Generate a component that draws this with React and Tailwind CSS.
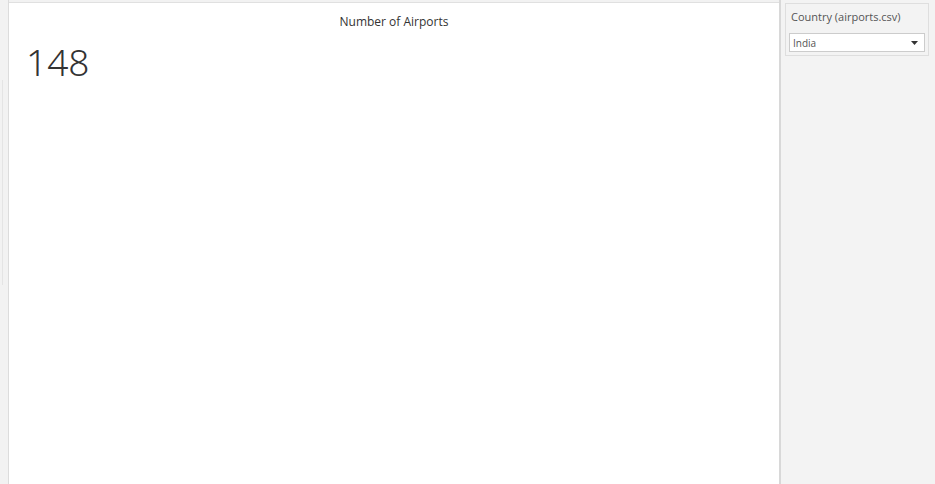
import React from 'react';

const App = () => {
    return (
        <div className="w-[935px] h-[484px] flex bg-[#f2f2f2] overflow-hidden" style={{ fontFamily: '"Open Sans", "Noto Sans", sans-serif' }}>
            {/* Left gutter */}
            <div className="w-[9px] h-full flex flex-col border-r border-[#dcdcdc]">
                <div className="h-[80px]" />
                <div className="w-[3px] h-[205px] border-r border-[#e4e4e4]" />
            </div>

            {/* Main sheet */}
            <div className="w-[770px] h-full pt-[2px] bg-[#f2f2f2]">
                <div className="h-full bg-white border-t border-[#e0e0e0] flex flex-col">
                    <div className="text-center text-[12px] text-[#333] pt-[12px] leading-[14px]">Number of Airports</div>
                    <div className="pl-[17px] pt-[14px] text-[37px] leading-[38px] text-[#333] font-light" style={{ fontFamily: '"Noto Sans", "Open Sans", sans-serif' }}>148</div>
                </div>
            </div>

            {/* Right panel */}
            <div className="flex-1 h-full border-l-2 border-[#d8d8d8] bg-[#f3f3f3] pl-[4px] pr-[6px] pt-[3px]">
                <div className="border border-[#dedede] bg-[#f3f3f3] px-[3px] pt-[6px] pb-[3px]">
                    <div className="text-[11px] leading-[14px] text-[#555] pl-[2px]">Country (airports.csv)</div>
                    <div className="mt-[9px] h-[19px] bg-white border border-[#cccccc] flex items-center justify-between pl-[3px] pr-[6px]">
                        <span className="text-[10px] text-[#555] leading-none">India</span>
                        <svg width="7" height="4" viewBox="0 0 7 4"><path d="M0 0 L7 0 L3.5 4 Z" fill="#333" /></svg>
                    </div>
                </div>
            </div>
        </div>
    );
};

export default App;
